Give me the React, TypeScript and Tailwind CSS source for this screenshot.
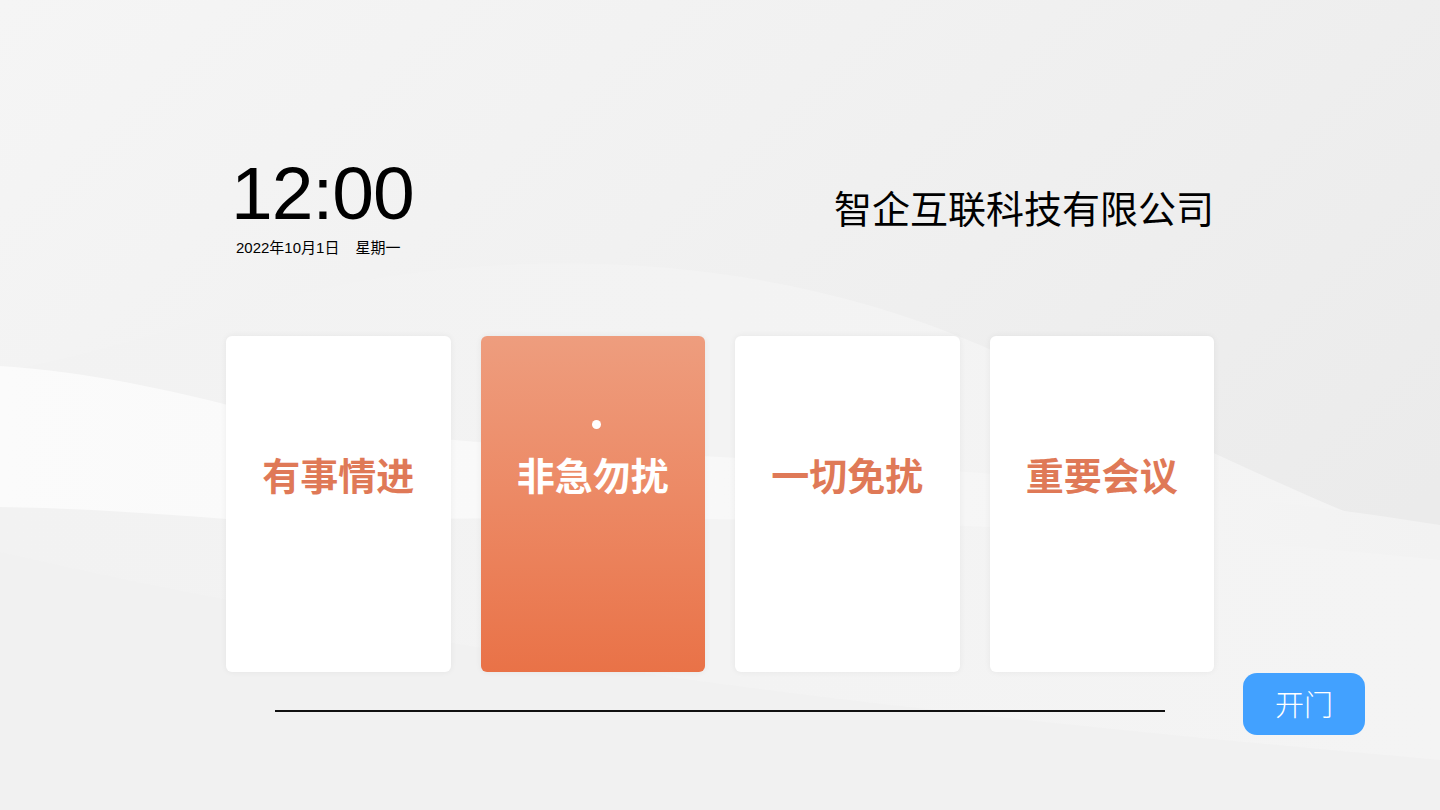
import React from "react";

const cards = [
  { label: "有事情进", active: false },
  { label: "非急勿扰", active: true },
  { label: "一切免扰", active: false },
  { label: "重要会议", active: false },
];

function Background() {
  return (
    <svg
      className="absolute inset-0 h-full w-full"
      viewBox="0 0 1440 810"
      preserveAspectRatio="none"
    >
      <defs>
        <linearGradient id="base" x1="0" y1="0" x2="1" y2="0.6">
          <stop offset="0" stopColor="#f5f5f5" />
          <stop offset="0.45" stopColor="#f1f1f1" />
          <stop offset="1" stopColor="#ebebeb" />
        </linearGradient>
        <linearGradient id="band" x1="0" y1="0" x2="1" y2="0">
          <stop offset="0" stopColor="#fbfbfb" />
          <stop offset="0.5" stopColor="#f8f8f8" />
          <stop offset="1" stopColor="#f2f2f2" />
        </linearGradient>
        <linearGradient id="lower" x1="0" y1="0" x2="1" y2="0">
          <stop offset="0" stopColor="#f2f2f2" />
          <stop offset="1" stopColor="#f4f4f4" />
        </linearGradient>
      </defs>
      <rect width="1440" height="810" fill="url(#base)" />
      <path
        d="M0 372 C 120 350, 220 310, 340 285 C 520 250, 760 250, 980 345 C 1140 415, 1300 500, 1440 548 V 810 H 0 Z"
        fill="url(#lower)"
      />
      <path
        d="M0 366 C 90 372, 170 390, 240 408 C 500 470, 900 440, 1440 525 V 560 C 900 505, 500 520, 240 520 C 160 514, 80 508, 0 507 Z"
        fill="url(#band)"
      />
      <path
        d="M0 552 C 80 570, 160 588, 240 602 C 600 680, 1000 720, 1440 760 V 810 H 0 Z"
        fill="#f1f1f1"
      />
    </svg>
  );
}

export default function App() {
  return (
    <div
      className="relative h-[810px] w-[1440px] overflow-hidden"
      style={{ fontFamily: '"Liberation Sans", "Noto Sans CJK SC", sans-serif' }}
    >
      <Background />
      <div className="relative mx-auto flex w-[988px] flex-col pt-[156px]">
        <div className="flex items-start justify-between">
          <div className="flex flex-col">
            <div className="pl-[5px] text-[75px] leading-none tracking-[-1px] text-black">12:00</div>
            <div className="mt-[9px] pl-[10px] text-[15px] leading-none text-black">
              2022年10月1日<span className="ml-[16px]">星期一</span>
            </div>
          </div>
          <div
            className="mt-[32px] text-[38px] leading-none text-black"
            style={{ fontFamily: '"Noto Sans CJK SC", sans-serif' }}
          >
            智企互联科技有限公司
          </div>
        </div>

        <div className="mt-[81px] grid grid-cols-4 gap-[30px]">
          {cards.map((c) => (
            <div
              key={c.label}
              className={
                c.active
                  ? "flex h-[336px] flex-col items-center rounded-[6px] bg-gradient-to-b from-[#ee9d7e] to-[#e97247] pt-[84px] shadow-[0_0_6px_rgba(0,0,0,0.06)]"
                  : "flex h-[336px] flex-col items-center rounded-[6px] bg-white pt-[84px] shadow-[0_0_6px_rgba(0,0,0,0.06)]"
              }
            >
              <div
                className={
                  c.active
                    ? "ml-[8px] h-[9px] w-[9px] rounded-full bg-white"
                    : "ml-[8px] h-[9px] w-[9px]"
                }
              />
              <div
                className={
                  c.active
                    ? "mt-[26px] text-[38px] font-bold leading-none text-white"
                    : "mt-[26px] text-[38px] font-bold leading-none text-[#df7957]"
                }
                style={{ fontFamily: '"Noto Sans CJK SC", sans-serif' }}
              >
                {c.label}
              </div>
            </div>
          ))}
        </div>

        <div className="relative">
          <div className="mx-[49px] mt-[38px] h-[2px] bg-[#111111]" />
          <button
            className="absolute right-[-151px] top-[1px] flex h-[62px] w-[122px] items-center justify-center rounded-[14px] bg-[#42a1ff] text-[29px] font-light text-white"
            style={{ fontFamily: '"Noto Sans CJK SC", sans-serif' }}
          >
            开门
          </button>
        </div>
      </div>
    </div>
  );
}
